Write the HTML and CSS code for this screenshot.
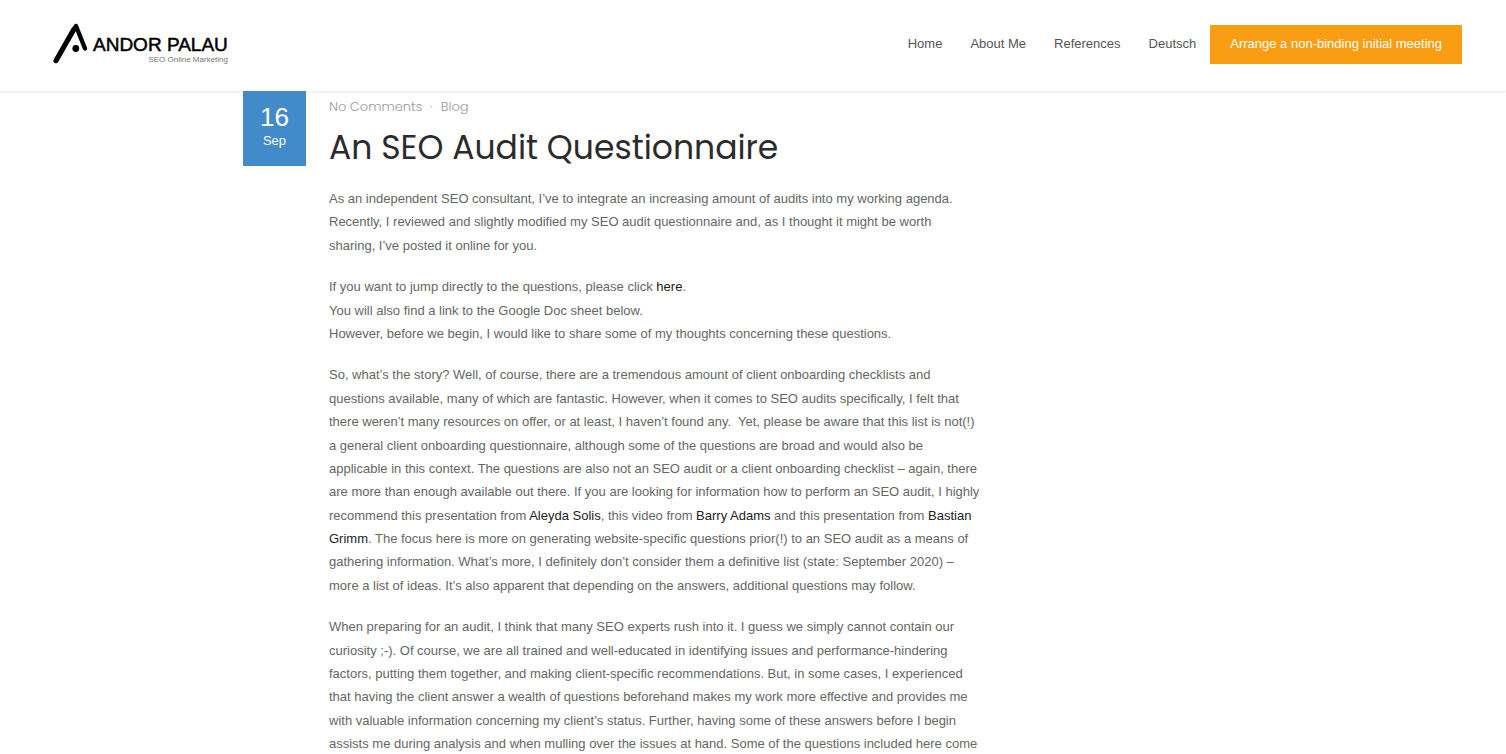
FILE: index.html
```html
<!DOCTYPE html>
<html lang="en">
<head>
<meta charset="utf-8">
<meta name="viewport" content="width=device-width, initial-scale=1">
<title>An SEO Audit Questionnaire</title>
<link rel="stylesheet" href="styles.css">
</head>
<body>
<header class="site-header">
  <a class="logo" href="#" aria-label="Andor Palau SEO Online Marketing">
    <svg class="logo-image" viewBox="0 0 180 48" width="180" height="48" aria-hidden="true">
      <path d="M5 41 25 6 34 28.500" fill="none" stroke="#000" stroke-width="4.400" stroke-linecap="round" stroke-linejoin="round"/>
      <path d="M5 40.500 23 9" fill="none" stroke="#000" stroke-width="5" stroke-linecap="round"/>
      <circle cx="24.800" cy="28.500" r="3.400" fill="#000"/>
      <text class="logo-name" x="42" y="31">ANDOR PALAU</text>
      <text class="logo-tag" x="177" y="42" text-anchor="end">SEO Online Marketing</text>
    </svg>
  </a>
  <nav class="nav">
    <a href="#">Home</a>
    <a href="#">About Me</a>
    <a href="#">References</a>
    <a href="#">Deutsch</a>
    <a class="cta" href="#">Arrange a non-binding initial meeting</a>
  </nav>
</header>
<main class="page">
  <time class="date" datetime="2020-09-16"><span class="day">16</span><span class="month">Sep</span></time>
  <article class="post">
    <div class="meta"><a href="#">No Comments</a><span>·</span><a href="#">Blog</a></div>
    <h1>An SEO Audit Questionnaire</h1>
    <p>As an independent SEO consultant, I’ve to integrate an increasing amount of audits into my working agenda.<br>Recently, I reviewed and slightly modified my SEO audit questionnaire and, as I thought it might be worth<br>sharing, I’ve posted it online for you.</p>
    <p>If you want to jump directly to the questions, please click <a href="#">here</a>.<br>You will also find a link to the Google Doc sheet below.<br>However, before we begin, I would like to share some of my thoughts concerning these questions.</p>
    <p>So, what’s the story? Well, of course, there are a tremendous amount of client onboarding checklists and<br>questions available, many of which are fantastic. However, when it comes to SEO audits specifically, I felt that<br>there weren’t many resources on offer, or at least, I haven’t found any.&nbsp; Yet, please be aware that this list is not(!)<br>a general client onboarding questionnaire, although some of the questions are broad and would also be<br>applicable in this context. The questions are also not an SEO audit or a client onboarding checklist – again, there<br>are more than enough available out there. If you are looking for information how to perform an SEO audit, I highly<br>recommend this presentation from <a href="#">Aleyda Solis</a>, this video from <a href="#">Barry Adams</a> and this presentation from <a href="#">Bastian<br>Grimm</a>. The focus here is more on generating website-specific questions prior(!) to an SEO audit as a means of<br>gathering information. What’s more, I definitely don’t consider them a definitive list (state: September 2020) –<br>more a list of ideas. It’s also apparent that depending on the answers, additional questions may follow.</p>
    <p>When preparing for an audit, I think that many SEO experts rush into it. I guess we simply cannot contain our<br>curiosity ;-). Of course, we are all trained and well-educated in identifying issues and performance-hindering<br>factors, putting them together, and making client-specific recommendations. But, in some cases, I experienced<br>that having the client answer a wealth of questions beforehand makes my work more effective and provides me<br>with valuable information concerning my client’s status. Further, having some of these answers before I begin<br>assists me during analysis and when mulling over the issues at hand. Some of the questions included here come</p>
  </article>
</main>
</body>
</html>
```
FILE: styles.css
```css
* { box-sizing: border-box; }
body {
  margin: 0;
  height: 100vh;
  overflow: hidden;
  background: #fff;
  color: #666;
  font: 13px/1.8 "Liberation Sans", Arial, sans-serif;
}
a { color: inherit; text-decoration: none; }
.site-header {
  display: flex;
  justify-content: space-between;
  align-items: flex-start;
  padding: 20px 44px 23px 51px;
  box-shadow: 0 1px 2px rgba(0, 0, 0, .1);
}
.logo-image { display: block; }
.logo-name { font-size: 19px; fill: #000; stroke: #000; stroke-width: .5px; }
.logo-tag { font-size: 8px; fill: #777; }
.nav {
  display: flex;
  align-items: center;
  padding-top: 5px;
  line-height: 37px;
  color: #555;
}
.nav a { margin-right: 28px; padding-bottom: 2px; }
.nav a:nth-child(4) { margin-right: 14px; }
.nav .cta { margin: 0; padding: 0 20px 2px; background: #f99d12; color: #fff; }
.page {
  display: grid;
  grid-template-columns: 63px minmax(0, 1fr);
  column-gap: 23px;
  align-items: start;
  max-width: 1020px;
  margin: 0 auto;
}
.date {
  display: flex;
  flex-direction: column;
  align-items: center;
  padding: 10px 0 18px;
  background: #428bca;
  color: #fff;
}
.day { font-size: 26px; line-height: 32px; }
.month { font-size: 13px; line-height: 15px; }
.post { white-space: nowrap; }
.meta {
  display: flex;
  gap: 8px;
  padding-top: 4px;
  font: 300 13px/24px Poppins, sans-serif;
  color: #999;
}
h1 {
  margin: 5px 0 15px;
  font: 400 33px/48px Poppins, sans-serif;
  color: #2b2b2b;
}
.post p { margin: 0 0 18px; }
.post p a { color: #222; }
```
